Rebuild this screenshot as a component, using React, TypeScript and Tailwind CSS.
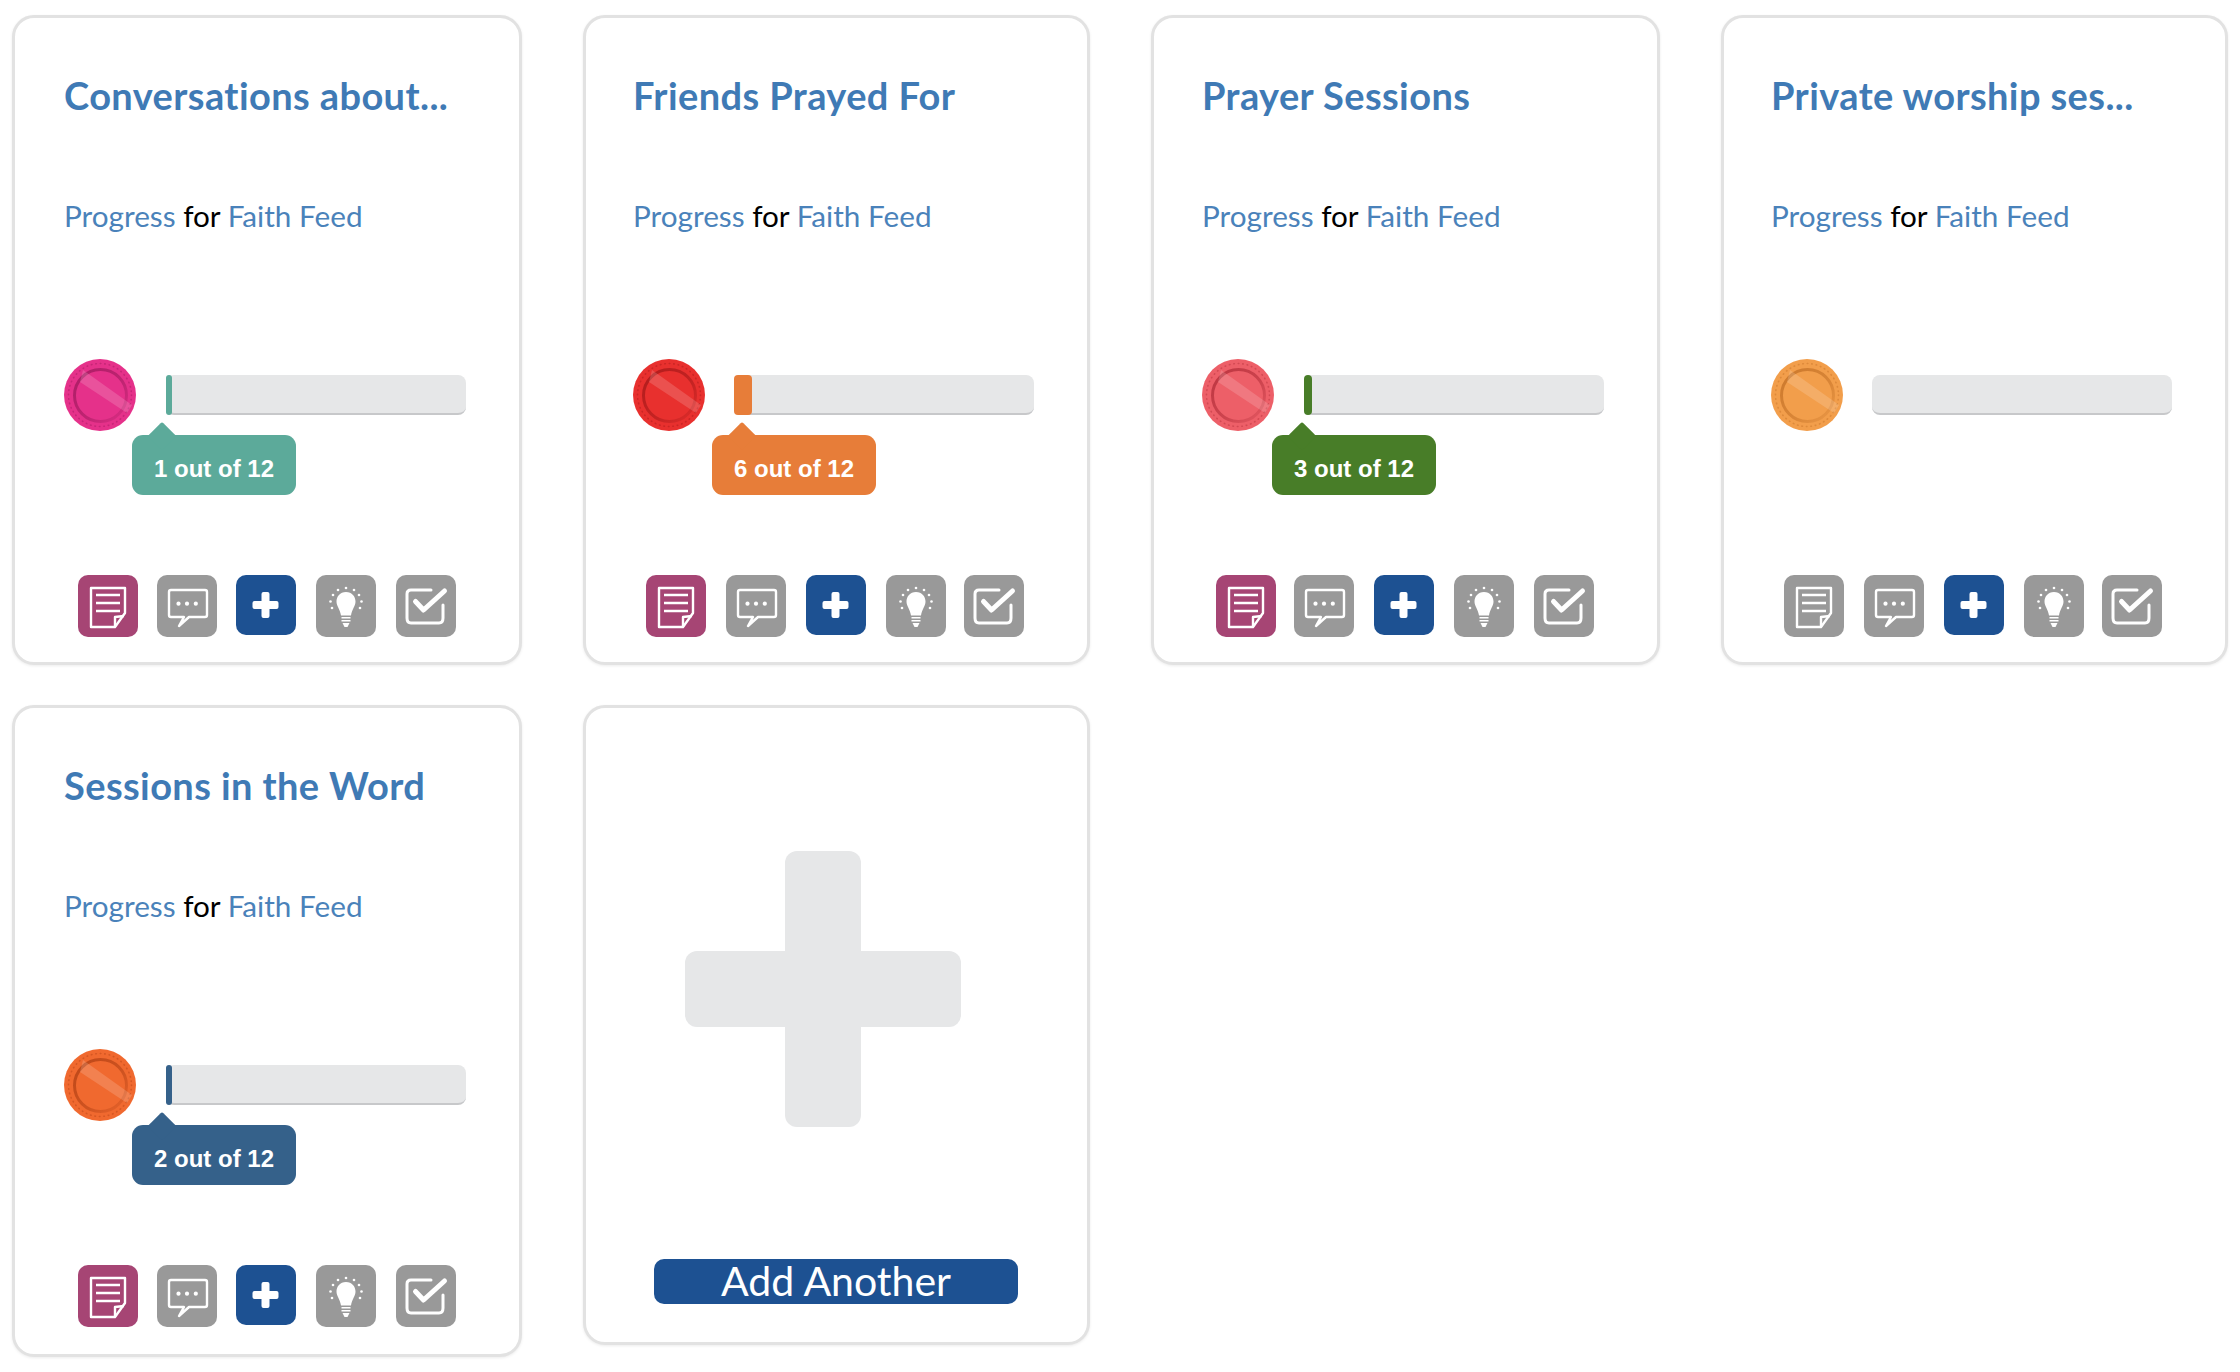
const sans = "font-['Lato',sans-serif]";

type Card = {
  title: string;
  coin: { main: string; dark: string };
  noteOff?: boolean;
  fill?: string;
  fillW?: string;
  bubbleX?: string;
  label?: string;
  pad: string;
  barGap: string;
  toolPad: string;
  toolGaps: string[];
  h: string;
};

const cards: Card[] = [
  {
    title: "Conversations about...",
    coin: { main: "#e5318a", dark: "#a81c63" },
    fill: "bg-[#5caa9a]",
    fillW: "w-[6px]",
    bubbleX: "left-[-34px]",
    label: "1 out of 12",
    pad: "pl-[49px]",
    barGap: "gap-[30px]",
    toolPad: "pl-[14px]",
    toolGaps: ["ml-[18.6px]", "ml-[19.6px]", "ml-[20px]", "ml-[20px]"],
    h: "h-[650px]",
  },
  {
    title: "Friends Prayed For",
    coin: { main: "#e8302e", dark: "#ad1b1b" },
    fill: "bg-[#e77d39]",
    fillW: "w-[18px]",
    bubbleX: "left-[-22px]",
    label: "6 out of 12",
    pad: "pl-[47px]",
    barGap: "gap-[29px]",
    toolPad: "pl-[13px]",
    toolGaps: ["ml-[20px]", "ml-[20px]", "ml-[20px]", "ml-[18px]"],
    h: "h-[650px]",
  },
  {
    title: "Prayer Sessions",
    coin: { main: "#ed5f68", dark: "#b9333e" },
    fill: "bg-[#487d28]",
    fillW: "w-[8px]",
    bubbleX: "left-[-32px]",
    label: "3 out of 12",
    pad: "pl-[48px]",
    barGap: "gap-[30px]",
    toolPad: "pl-[14px]",
    toolGaps: ["ml-[18px]", "ml-[20px]", "ml-[20px]", "ml-[20px]"],
    h: "h-[650px]",
  },
  {
    title: "Private worship ses...",
    coin: { main: "#f29e4b", dark: "#c9762a" },
    noteOff: true,
    pad: "pl-[47px]",
    barGap: "gap-[29px]",
    toolPad: "pl-[13px]",
    toolGaps: ["ml-[20px]", "ml-[20px]", "ml-[20px]", "ml-[18px]"],
    h: "h-[650px]",
  },
  {
    title: "Sessions in the Word",
    coin: { main: "#f0692f", dark: "#b94517" },
    fill: "bg-[#35618a]",
    fillW: "w-[6px]",
    bubbleX: "left-[-34px]",
    label: "2 out of 12",
    pad: "pl-[49px]",
    barGap: "gap-[30px]",
    toolPad: "pl-[14px]",
    toolGaps: ["ml-[18.6px]", "ml-[19.6px]", "ml-[20px]", "ml-[20px]"],
    h: "h-[652px]",
  },
];

const Coin = ({ main, dark, id }: { main: string; dark: string; id: string }) => (
  <svg width="72" height="72" viewBox="0 0 72 72" className="shrink-0">
    <defs>
      <clipPath id={id}>
        <circle cx="36" cy="36" r="36" />
      </clipPath>
      <linearGradient id={`${id}-ring`} x1="0" y1="0" x2="1" y2="1">
        <stop offset="0" stopColor={dark} stopOpacity="0.95" />
        <stop offset="0.6" stopColor={dark} stopOpacity="0.6" />
        <stop offset="1" stopColor={dark} stopOpacity="0.15" />
      </linearGradient>
    </defs>
    <circle cx="36" cy="36" r="36" fill={main} />
    <circle cx="36" cy="36" r="31.5" fill="none" stroke={dark} strokeOpacity="0.5" strokeWidth="1.6" strokeLinecap="round" strokeDasharray="0.5 4" />
    <circle cx="36.5" cy="36.5" r="26" fill="none" stroke={`url(#${id}-ring)`} strokeWidth="3" />
    <polygon points="19,11 68,46 63,54 16,23" fill="#ffffff" fillOpacity="0.16" clipPath={`url(#${id})`} />
  </svg>
);

const DocIcon = () => (
  <svg width="60" height="62" viewBox="0 0 60 62" fill="none" stroke="#fff" strokeWidth="2.4" strokeLinejoin="round">
    <path d="M13 13H47V38L37 52H13Z" />
    <path d="M37 52V42L46 41" />
    <path d="M18 20H42M18 28H42M18 36H42" />
  </svg>
);

const ChatIcon = () => (
  <svg width="60" height="62" viewBox="0 0 60 62" fill="none" stroke="#fff" strokeWidth="2.4" strokeLinejoin="round" strokeLinecap="round">
    <path d="M14 15H48Q50 15 50 17V40Q50 42 48 42H32L22 51L27 42H14Q12 42 12 40V17Q12 15 14 15Z" />
    <circle cx="21.5" cy="28.7" r="2.1" fill="#fff" stroke="none" />
    <circle cx="30" cy="28.7" r="2.1" fill="#fff" stroke="none" />
    <circle cx="38.8" cy="28.7" r="2.1" fill="#fff" stroke="none" />
  </svg>
);

const PlusIcon = () => (
  <svg width="60" height="60" viewBox="0 0 60 60" fill="#fff">
    <rect x="16.5" y="26" width="26" height="8" rx="2" />
    <rect x="25.5" y="17" width="8" height="26" rx="2" />
  </svg>
);

const BulbIcon = () => (
  <svg width="60" height="62" viewBox="0 0 60 62" fill="#fff">
    <path d="M30 17C24 17 20.5 21.5 20.5 26.5C20.5 31 24 34 25 40.5H35C36 34 39.5 31 39.5 26.5C39.5 21.5 36 17 30 17Z" />
    <path d="M25.5 42H34.5V43.6H25.5ZM25.5 45H34.5V46.6H25.5ZM26.5 48H33.5L31.5 52H28.5Z" />
    {[
      [16, 33],
      [14.5, 26.5],
      [17, 20],
      [22, 15],
      [30, 13],
      [38, 15],
      [43, 20],
      [45.5, 26.5],
      [44, 33],
    ].map(([x, y]) => (
      <circle key={`${x}-${y}`} cx={x} cy={y} r="1.3" />
    ))}
  </svg>
);

const CheckIcon = () => (
  <svg width="60" height="62" viewBox="0 0 60 62" fill="none" stroke="#fff" strokeLinecap="round" strokeLinejoin="round">
    <path d="M35 15H15Q11 15 11 19V43Q11 48 15 48H43Q47 48 47 43V30" strokeWidth="3" />
    <path d="M19.5 26.5L27.5 35L48.5 16" strokeWidth="5" />
  </svg>
);

const Tools = ({ gaps, noteOff }: { gaps: string[]; noteOff?: boolean }) => (
  <div className="flex items-start">
    <div className={`flex h-[62px] w-[60px] items-center justify-center rounded-[10px] ${noteOff ? "bg-[#999999]" : "bg-[#a64574]"}`}>
      <DocIcon />
    </div>
    <div className={`flex h-[62px] w-[60px] items-center justify-center rounded-[10px] bg-[#999999] ${gaps[0]}`}>
      <ChatIcon />
    </div>
    <div className={`flex h-[60px] w-[60px] items-center justify-center rounded-[10px] bg-[#1d5192] ${gaps[1]}`}>
      <PlusIcon />
    </div>
    <div className={`flex h-[62px] w-[60px] items-center justify-center rounded-[10px] bg-[#999999] ${gaps[2]}`}>
      <BulbIcon />
    </div>
    <div className={`flex h-[62px] w-[60px] items-center justify-center rounded-[10px] bg-[#999999] ${gaps[3]}`}>
      <CheckIcon />
    </div>
  </div>
);

const ProgressCard = ({ card, id }: { card: Card; id: string }) => (
  <div className={`${card.h} ${card.pad} rounded-[22px] border-[3px] border-[#e2e2e2] bg-white pt-[55px] shadow-[0_1px_3px_rgba(0,0,0,0.08)]`}>
    <h2 className={`${sans} h-[44px] whitespace-nowrap text-[38px] font-bold leading-[44px] tracking-[0.4px] text-[#3f7ab5]`}>{card.title}</h2>
    <p className={`${sans} mt-[79px] h-[40px] whitespace-nowrap text-[29.7px] font-normal leading-[40px] text-[#4a82ba]`}>
      Progress <span className="text-black">for</span> Faith Feed
    </p>
    <div className={`mt-[123px] flex h-[72px] items-center ${card.barGap}`}>
      <Coin main={card.coin.main} dark={card.coin.dark} id={id} />
      <div className="relative h-[40px] w-[300px] rounded-[8px] border-b-2 border-[#c7c8ca] bg-[#e6e7e8]">
        {card.fill && <div className={`h-[40px] rounded-[4px] ${card.fill} ${card.fillW}`} />}
        {card.label && (
          <div className={`absolute top-[60px] flex h-[60px] w-[164px] items-center justify-center rounded-[11px] ${card.bubbleX} ${card.fill}`}>
            <div className={`absolute left-[20px] top-[-9px] h-[20px] w-[20px] rotate-45 rounded-[2px] ${card.fill}`} />
            <span className="relative mt-[7px] font-['Liberation_Sans',sans-serif] text-[24px] font-bold text-white">{card.label}</span>
          </div>
        )}
      </div>
    </div>
    <div className={`mt-[144px] ${card.toolPad}`}>
      <Tools gaps={card.toolGaps} noteOff={card.noteOff} />
    </div>
  </div>
);

const AddCard = () => (
  <div className="flex h-[640px] flex-col rounded-[22px] border-[3px] border-[#e2e2e2] bg-white pt-[143px] shadow-[0_1px_3px_rgba(0,0,0,0.08)]">
    <svg width="276" height="276" viewBox="0 0 276 276" fill="#e6e7e8" className="ml-[99px]">
      <rect x="100" y="0" width="76" height="276" rx="12" />
      <rect x="0" y="100" width="276" height="76" rx="12" />
    </svg>
    <button className={`${sans} ml-[68px] mt-[132px] h-[45px] w-[364px] rounded-[10px] bg-[#1d5192] pb-[2px] text-[41px] font-normal leading-[43px] text-white`}>
      Add Another
    </button>
  </div>
);

export default function App() {
  return (
    <div className="min-h-screen bg-white pl-[12px] pt-[15px]">
      <div className="grid grid-cols-[510px_507px_509px_507px] items-start gap-x-[61px] gap-y-[40px]">
        {cards.map((card, i) => (
          <ProgressCard key={card.title} card={card} id={`coin-${i}`} />
        ))}
        <AddCard />
      </div>
    </div>
  );
}
